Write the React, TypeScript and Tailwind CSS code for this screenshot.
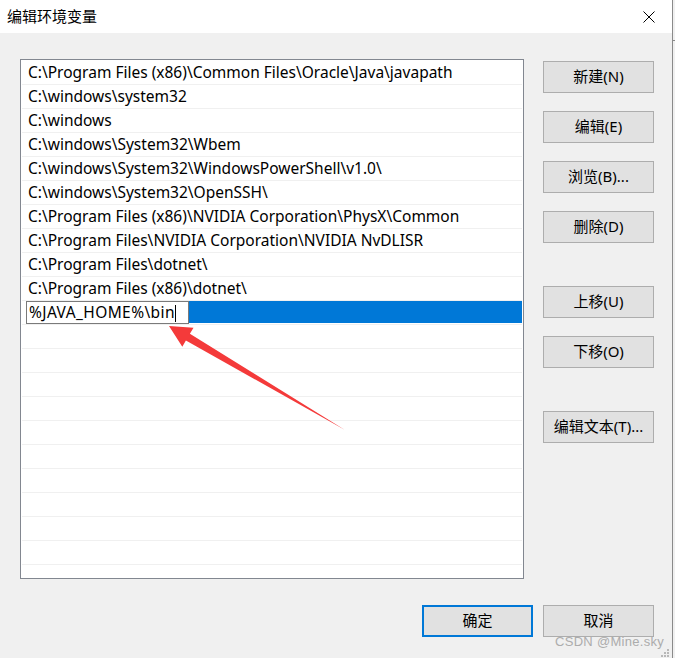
import React from "react";

const paths = [
  "C:\\Program Files (x86)\\Common Files\\Oracle\\Java\\javapath",
  "C:\\windows\\system32",
  "C:\\windows",
  "C:\\windows\\System32\\Wbem",
  "C:\\windows\\System32\\WindowsPowerShell\\v1.0\\",
  "C:\\windows\\System32\\OpenSSH\\",
  "C:\\Program Files (x86)\\NVIDIA Corporation\\PhysX\\Common",
  "C:\\Program Files\\NVIDIA Corporation\\NVIDIA NvDLISR",
  "C:\\Program Files\\dotnet\\",
  "C:\\Program Files (x86)\\dotnet\\",
];

const Btn: React.FC<{ label: string; primary?: boolean; className?: string }> = ({
  label,
  primary,
  className = "",
}) => (
  <div
    className={`flex items-center justify-center w-[111px] h-[32px] bg-[#e1e1e1] text-[15px] text-black pb-[1px] ${
      primary ? "border-2 border-[#0078d7]" : "border border-[#adadad]"
    } ${className}`}
  >
    {label}
  </div>
);

export default function App() {
  return (
    <div className="flex w-[675px] h-[658px] bg-[#f0f0f0] font-['Noto_Sans','Noto_Sans_CJK_SC',sans-serif]">
      <div className="relative w-[672px] h-[658px] flex flex-col">
        {/* title bar */}
        <div className="h-[33px] bg-white flex items-center justify-between pl-[7px] pr-[17px]">
          <span className="text-[15px] text-black font-['Noto_Sans_CJK_SC',sans-serif]">编辑环境变量</span>
          <svg width="12" height="12" viewBox="0 0 12 12">
            <path d="M0.5 0.5 L11.5 11.5 M11.5 0.5 L0.5 11.5" stroke="#000" strokeWidth="1" />
          </svg>
        </div>

        <div className="flex pl-[20px] pt-[26px] gap-[19px]">
          {/* list */}
          <div className="w-[504px] h-[520px] border border-[#828790] bg-white p-[1px] overflow-hidden">
            {paths.map((p) => (
              <div
                key={p}
                className="h-[24px] border-b border-[#f0f0f0] flex items-center pl-[6px] pt-[1px] text-[15.5px] text-black whitespace-nowrap"
              >
                {p}
              </div>
            ))}
            <div className="h-[24px] flex pb-[1px] border-b border-[#f0f0f0]">
              <div className="w-[4px]" />
              <div className="w-[163px] h-[23px] border border-[#7a7a7a] bg-white flex items-center pl-[2px] pt-[1px] text-[15.5px] tracking-[0.4px] text-black whitespace-nowrap">
                %JAVA_HOME%\bin
                <span className="w-[1px] h-[17px] bg-black" />
              </div>
              <div className="flex-1 bg-[#0078d7]" />
            </div>
            {[...Array(11)].map((_, i) => (
              <div key={`e-${i}`} className="h-[24px] border-b border-[#f0f0f0]" />
            ))}
          </div>

          {/* side buttons */}
          <div className="flex flex-col pt-[2px]">
            <Btn label="新建(N)" />
            <Btn label="编辑(E)" className="mt-[18px]" />
            <Btn label="浏览(B)..." className="mt-[18px]" />
            <Btn label="删除(D)" className="mt-[18px]" />
            <Btn label="上移(U)" className="mt-[43px]" />
            <Btn label="下移(O)" className="mt-[18px]" />
            <Btn label="编辑文本(T)..." className="mt-[43px]" />
          </div>
        </div>

        <div className="flex justify-end gap-[10px] pr-[18px] mt-[26px]">
          <Btn label="确定" primary />
          <Btn label="取消" />
        </div>

        {/* annotation arrow */}
        <svg className="absolute left-0 top-0 pointer-events-none" width="672" height="658">
          <polygon
            points="169,326 193.5,327.7 189.9,333.8 345,430 185.9,340.6 182.3,346.7"
            fill="#f43a3a"
          />
        </svg>

        <div className="absolute left-[555px] top-[632px] text-[13px] text-[#acacac] font-['Liberation_Sans',sans-serif] tracking-[0.3px]">
          CSDN @Mine.sky
        </div>

        {/* resize grip */}
        <svg className="absolute left-[660px] top-[648px]" width="10" height="10">
          {[
            [7, 1],
            [4, 4],
            [7, 4],
            [1, 7],
            [4, 7],
            [7, 7],
          ].map(([x, y]) => (
            <rect key={`${x}-${y}`} x={x} y={y} width="2" height="2" fill="#b8b8b8" />
          ))}
        </svg>
      </div>
      <div className="w-[1px] bg-[#8a8a8a]" />
      <div className="flex-1 bg-[#f0f0f0] flex flex-col">
        <div className="h-[40px]" />
        <div className="h-[1px] bg-[#8a8a8a]" />
      </div>
    </div>
  );
}
